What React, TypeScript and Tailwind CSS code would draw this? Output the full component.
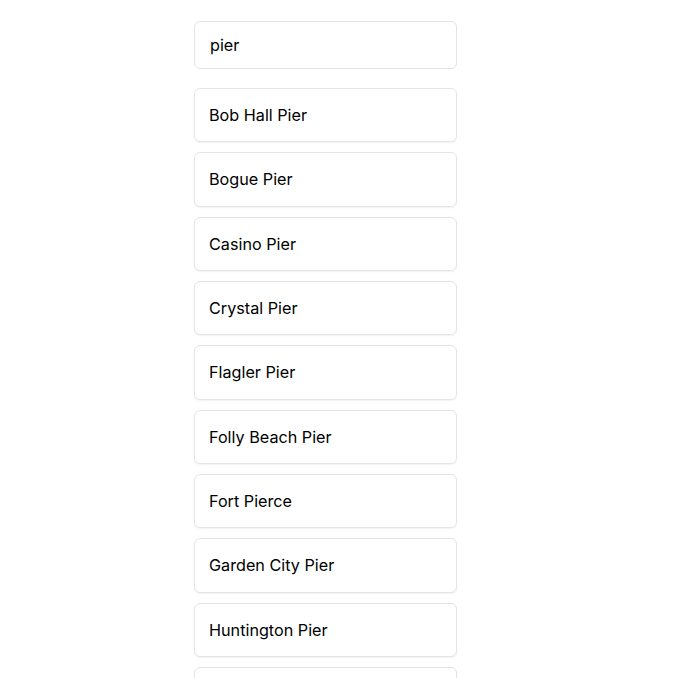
import { useState } from "react";

const piers = [
  "Bob Hall Pier",
  "Bogue Pier",
  "Casino Pier",
  "Crystal Pier",
  "Flagler Pier",
  "Folly Beach Pier",
  "Fort Pierce",
  "Garden City Pier",
  "Huntington Pier",
  "Jennette's Pier",
];

export default function App() {
  const [query, setQuery] = useState("pier");

  return (
    <div className="min-h-screen bg-white text-black font-['Inter',sans-serif]">
      <div className="ml-[194px] w-[263px] pt-[21px]">
        <input
          value={query}
          onChange={(e) => setQuery(e.target.value)}
          className="block w-full h-[48px] px-[15px] text-[16.2px] text-black border border-[#e4e4e4] rounded-[6px] outline-none"
        />

        <ul className="mt-[19px]">
          {piers.map((name) => (
            <li
              key={name}
              className="flex items-center h-[54.33px] mb-[10px] px-[14px] text-[16.2px] border border-[#e4e4e4] rounded-[6px] shadow-[0_1px_2px_rgba(0,0,0,0.06)]"
            >
              {name}
            </li>
          ))}
        </ul>
      </div>
    </div>
  );
}
